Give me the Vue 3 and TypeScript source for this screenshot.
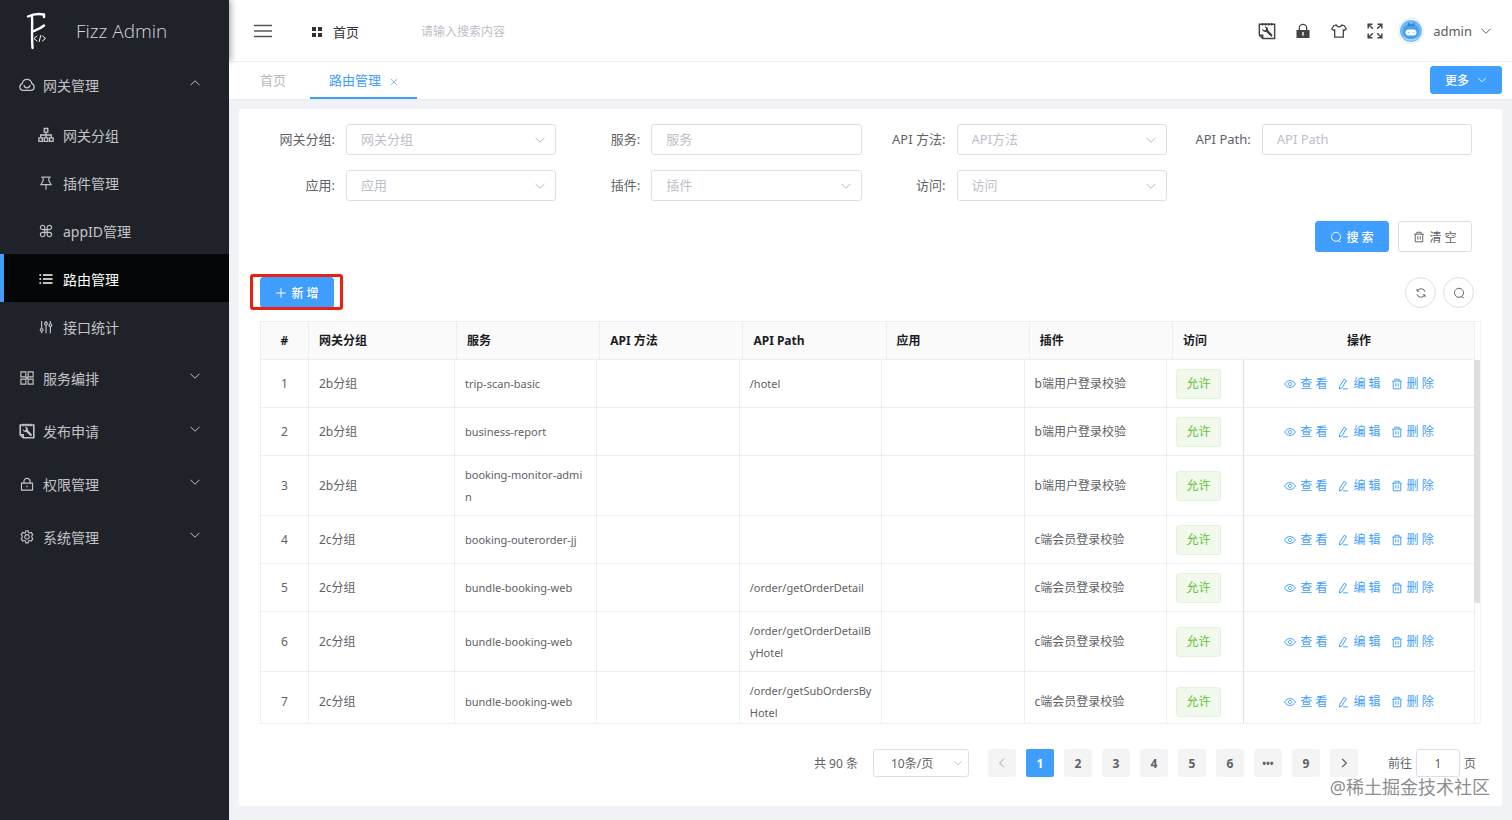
<script setup lang="ts">
import { ref } from 'vue'

interface Icon { paths: string[]; solid?: string[] }

const icons: Record<string, Icon> = {
  cloud: { paths: ['M4.3 13.4C2 13.2.9 11.600.9 9.900c0-1.700 1.100-2.900 2.300-3.300C3.700 4 5.600 2.300 8 2.300s4.300 1.700 4.800 4.300c1.200.4 2.300 1.600 2.300 3.300 0 1.700-1.100 3.300-3.400 3.500z', 'M5 8.200c.3 1.700 1.500 2.700 3 2.700s2.700-1 3-2.700'] },
  tree: { paths: ['M6.200 1.500h3.600v3.700H6.200z', 'M.9 10.800h3.500v3.500H.9z', 'M6.200 10.800h3.600v3.500H6.200z', 'M11.600 10.800h3.500v3.500h-3.500z', 'M8 5.200v5.600M2.700 10.800V8h10.600v2.800'] },
  pin: { paths: ['M2.500 1.300h11', 'M4.700 1.500v4L2.200 9.800h11.600l-2.500-4.300v-4', 'M8 9.800v6'] },
  clover: { paths: ['M6.400 6.400H4.100a2.500 2.500 0 1 1 2.500-2.500v8.200a2.500 2.500 0 1 1-2.500-2.500h7.800a2.500 2.500 0 1 1-2.500 2.500V3.900a2.500 2.500 0 1 1 2.500 2.500z'] },
  list: { paths: ['M4.500 3.500h11M4.500 8h11M4.500 12.500h11', 'M.5 3.500h2M.5 8h2M.5 12.500h2'] },
  sliders: { paths: ['M3 1v9M8 6v9M13 1v3M13 8v7M3 13v2M8 1v2', 'M3 9.700a1.600 1.600 0 1 0 .01 0z', 'M8 2.700a1.600 1.600 0 1 0 .01 0z', 'M13 4.300a1.600 1.600 0 1 0 .01 0z'] },
  blocks: { paths: ['M1 1h5.700v5.700H1zM9.300 1H15v5.700H9.300zM1 9.300h5.700V15H1zM9.300 9.300H15V15H9.300z', 'M6.700 6.700l2.600 2.600M9.300 6.700L6.700 9.300'] },
  wrench: { paths: ['M1.200 2h13.600v12.700H4.200l-3-3z', 'M1.400 11.700h2.800v2.800', 'M4 .8v2.400M6.700.8v2.400M9.300.8v2.400M12 .8v2.400', 'M7.500 8l4.800 4.700'], solid: ['M3.800 6l1.500 1.400 1.500-.4.3-1.500-1.400-1.400c1.500-.5 3.200.4 3.300 2.200l-.1.900 4.100 4.300-1.300 1.300-4.300-4.100c-1.900.7-4-.7-3.600-2.700z'] },
  lock: { paths: ['M1.700 7h12.600v8H1.700z', 'M4.500 7V5a3.500 3.500 0 0 1 7 0v2', 'M8 9.700v2'] },
  lockSolid: { paths: ['M4.300 7V5a3.700 3.700 0 0 1 7.400 0v2'], solid: ['M1.500 7h13v8h-13zM7.300 9v3.700h1.400V9z'] },
  gear: { paths: ['M6.700.9h2.600l.4 2 1.300.7 1.900-.7 1.700 2.300-1.100 1.600v1.700l1.100 1.700-1.700 2.400-1.900-.6-1.300.7-.4 2H6.700l-.4-2-1.300-.7-1.900.6-1.700-2.400 1.100-1.700V6.800L1.400 5.200 3.100 2.900l1.900.7 1.300-.7z', 'M8 5.300a2.600 2.600 0 1 0 .01 0z'] },
  shirt: { paths: ['M5.200 2c.5 1.200 1.600 1.800 2.800 1.800S10.300 3.200 10.800 2L13.300 2.700 15.300 6l-2.500 1.600-.5-.4V14.200H3.700V7.200l-.5.4L.7 6l2-3.300z'] },
  full: { paths: ['M1.200 5.500V1.200h4.300M1.500 1.500l4.300 4.300', 'M10.500 1.200h4.300v4.300M14.500 1.500l-4.300 4.300', 'M1.200 10.500v4.300h4.300M1.500 14.500l4.300-4.300', 'M10.500 14.800h4.300v-4.300M14.500 14.500l-4.300-4.300'] },
  search: { paths: ['M8 1.700a6 6 0 1 0 .01 0z', 'M11 13l3.200 1.500'] },
  refresh: { paths: ['M13.500 6.500A5.700 5.700 0 0 0 3 5.300M2.700 2.500v3h3', 'M2.500 9.500A5.700 5.700 0 0 0 13 10.700M13.300 13.500v-3h-3'] },
  trash: { paths: ['M1.500 4.200h13', 'M5.200 4V1.700h5.600V4', 'M3 4.200v10.200h10V4.200', 'M6.400 7v4.500M9.600 7v4.500'] },
  plus: { paths: ['M8 1.500v13M1.500 8h13'] },
  eye: { paths: ['M.8 8C2.500 5 5 3.400 8 3.400S13.500 5 15.200 8c-1.700 3-4.200 4.600-7.200 4.600S2.500 11 .8 8z', 'M8 5.800a2.200 2.200 0 1 0 .01 0z'] },
  edit: { paths: ['M9.500 1.700l3 1.800-6 9.700-3.200 1.500.2-3.400z', 'M8 14.500h6.500'] },
  down: { paths: ['M2 5l6 6 6-6'] },
  up: { paths: ['M2 11l6-6 6 6'] },
  left: { paths: ['M10.500 2.500L5 8l5.500 5.500'] },
  right: { paths: ['M5.500 2.500L11 8l-5.500 5.500'] },
  close: { paths: ['M2 2l12 12M14 2L2 14'] },
  menu: { paths: ['M0 2.500h16M0 8h16M0 13.500h16'] },
}

const subMenu = [
  { icon: 'tree', label: '网关分组' },
  { icon: 'pin', label: '插件管理' },
  { icon: 'clover', label: 'appID管理' },
  { icon: 'list', label: '路由管理' },
  { icon: 'sliders', label: '接口统计' },
]
const activeItem = ref('路由管理')

const groups = [
  { icon: 'blocks', label: '服务编排' },
  { icon: 'wrench', label: '发布申请' },
  { icon: 'lock', label: '权限管理' },
  { icon: 'gear', label: '系统管理' },
]

const tools = [
  { icon: 'wrench', label: '调试' },
  { icon: 'lockSolid', label: '锁屏' },
  { icon: 'shirt', label: '主题' },
  { icon: 'full', label: '全屏' },
]

const fields = [
  { id: 'group', label: '网关分组', hint: '网关分组', select: true },
  { id: 'service', label: '服务', hint: '服务', select: false },
  { id: 'method', label: 'API 方法', hint: 'API方法', select: true },
  { id: 'path', label: 'API Path', hint: 'API Path', select: false },
  { id: 'app', label: '应用', hint: '应用', select: true },
  { id: 'plugin', label: '插件', hint: '插件', select: true },
  { id: 'access', label: '访问', hint: '访问', select: true },
]

const headers = ['#', '网关分组', '服务', 'API 方法', 'API Path', '应用', '插件', '访问', '操作']

const rows = [
  { group: '2b分组', service: 'trip-scan-basic', path: '/hotel', plugin: 'b端用户登录校验' },
  { group: '2b分组', service: 'business-report', path: '', plugin: 'b端用户登录校验' },
  { group: '2b分组', service: 'booking-monitor-admin', path: '', plugin: 'b端用户登录校验' },
  { group: '2c分组', service: 'booking-outerorder-jj', path: '', plugin: 'c端会员登录校验' },
  { group: '2c分组', service: 'bundle-booking-web', path: '/order/getOrderDetail', plugin: 'c端会员登录校验' },
  { group: '2c分组', service: 'bundle-booking-web', path: '/order/getOrderDetailByHotel', plugin: 'c端会员登录校验' },
  { group: '2c分组', service: 'bundle-booking-web', path: '/order/getSubOrdersByHotel', plugin: 'c端会员登录校验' },
]

const actions = [
  { icon: 'eye', label: '查 看' },
  { icon: 'edit', label: '编 辑' },
  { icon: 'trash', label: '删 除' },
]

const pages = ['1', '2', '3', '4', '5', '6', '•••', '9']
const page = ref('1')
const jump = ref('1')
</script>

<template>
  <div class="layout">
    <aside class="side">
      <div class="brand">
        <svg class="logo" viewBox="0 0 22 38" aria-hidden="true">
          <path d="M2 4.500C7 2 13 1.500 18 2.500M18 2.500V5M6 5C6.500 15 5.500 25 6.500 36M6.500 19.500C10 18 14 17 18 13.500" />
          <path class="thin" d="M11 24l-3 2.500 3 2.500M16.500 24l3 2.500-3 2.500M14.700 23.500l-1.500 6" />
        </svg>
        <span>Fizz Admin</span>
      </div>
      <nav>
        <button class="group" type="button">
          <svg class="ico" viewBox="0 0 16 16"><path v-for="d in icons.cloud.paths" :key="d" :d="d" /></svg>
          <span>网关管理</span>
          <svg class="arrow" viewBox="0 0 16 16"><path v-for="d in icons.up.paths" :key="d" :d="d" /></svg>
        </button>
        <a v-for="m in subMenu" :key="m.label" href="#" class="sub" :class="{ on: m.label === activeItem }" @click.prevent="activeItem = m.label">
          <svg class="ico" :class="m.icon" viewBox="0 0 16 16">
            <path v-for="d in icons[m.icon].paths" :key="d" :d="d" />
            <path v-for="d in icons[m.icon].solid" :key="d" :d="d" class="solid" />
          </svg>
          <span>{{ m.label }}</span>
        </a>
        <button v-for="g in groups" :key="g.label" class="group" type="button">
          <svg class="ico" :class="g.icon" viewBox="0 0 16 16">
            <path v-for="d in icons[g.icon].paths" :key="d" :d="d" />
            <path v-for="d in icons[g.icon].solid" :key="d" :d="d" class="solid" />
          </svg>
          <span>{{ g.label }}</span>
          <svg class="arrow" viewBox="0 0 16 16"><path v-for="d in icons.down.paths" :key="d" :d="d" /></svg>
        </button>
      </nav>
    </aside>

    <div class="main">
      <header class="top">
        <button class="plain burger" type="button" aria-label="菜单">
          <svg viewBox="0 0 16 16" preserveAspectRatio="none"><path v-for="d in icons.menu.paths" :key="d" :d="d" /></svg>
        </button>
        <a class="home" href="#">
          <svg viewBox="0 0 10 10"><path class="solid" d="M0 0h4v4H0zM6 0h4v4H6zM0 6h4v4H0zM6 6h4v4H6z" /></svg>
          <span>首页</span>
        </a>
        <input class="seek" type="text" aria-label="搜索" placeholder="请输入搜索内容" />
        <div class="tools">
          <button v-for="t in tools" :key="t.icon" class="plain tool" type="button" :aria-label="t.label">
            <svg viewBox="0 0 16 16" :class="t.icon">
              <path v-for="d in icons[t.icon].paths" :key="d" :d="d" />
              <path v-for="d in icons[t.icon].solid" :key="d" :d="d" class="solid" />
            </svg>
          </button>
          <svg class="avatar" viewBox="0 0 26 26" aria-hidden="true">
            <circle cx="13" cy="13" r="12.500" fill="#fff" stroke="#e4eefa" />
            <circle cx="13" cy="13" r="11" fill="#74b8f2" />
            <path d="M4 18a11 11 0 0 0 18 0l-3 1H7z" fill="#a9d5fa" />
            <path d="M5 14c0-5 3-8 8-8s8 3 8 8-3 7-8 7-8-2-8-7z" fill="#4a9fec" />
            <path d="M10 4l3 3 4-3-1 4h-6z" fill="#2f84d8" />
            <rect x="7.500" y="11.500" width="11" height="6" rx="3" fill="#fff" />
            <path d="M10 14.500h1.500M14.500 14.500H16" stroke="#8cc4f4" stroke-width="1" />
          </svg>
          <button class="plain user" type="button">
            <span>admin</span>
            <svg viewBox="0 0 16 16"><path v-for="d in icons.down.paths" :key="d" :d="d" /></svg>
          </button>
        </div>
      </header>

      <div class="tabs">
        <a class="tab" href="#">首页</a>
        <a class="tab on" href="#">
          <span>路由管理</span>
          <svg viewBox="0 0 16 16"><path v-for="d in icons.close.paths" :key="d" :d="d" /></svg>
        </a>
        <button class="btn primary more" type="button">
          <span>更多</span>
          <svg viewBox="0 0 16 16"><path v-for="d in icons.down.paths" :key="d" :d="d" /></svg>
        </button>
      </div>

      <main class="card">
        <form class="filters" @submit.prevent>
          <div v-for="f in fields" :key="f.id" class="field">
            <label :for="f.id">{{ f.label }}:</label>
            <div class="control">
              <select v-if="f.select" :id="f.id"><option>{{ f.hint }}</option></select>
              <input v-else :id="f.id" type="text" :placeholder="f.hint" />
              <svg v-if="f.select" class="caret" viewBox="0 0 16 16"><path v-for="d in icons.down.paths" :key="d" :d="d" /></svg>
            </div>
          </div>
          <div class="buttons">
            <button class="btn primary" type="submit">
              <svg viewBox="0 0 16 16"><path v-for="d in icons.search.paths" :key="d" :d="d" /></svg>
              <span>搜 索</span>
            </button>
            <button class="btn" type="reset">
              <svg viewBox="0 0 16 16"><path v-for="d in icons.trash.paths" :key="d" :d="d" /></svg>
              <span>清 空</span>
            </button>
          </div>
        </form>

        <div class="bar">
          <div class="add">
            <button class="btn primary" type="button">
              <svg viewBox="0 0 16 16"><path v-for="d in icons.plus.paths" :key="d" :d="d" /></svg>
              <span>新 增</span>
            </button>
            <div class="frame"></div>
          </div>
          <div class="rounds">
            <button class="round" type="button" aria-label="刷新">
              <svg viewBox="0 0 16 16"><path v-for="d in icons.refresh.paths" :key="d" :d="d" /></svg>
            </button>
            <button class="round" type="button" aria-label="搜索">
              <svg viewBox="0 0 16 16"><path v-for="d in icons.search.paths" :key="d" :d="d" /></svg>
            </button>
          </div>
        </div>

        <div class="grid">
          <table class="head">
            <colgroup>
              <col class="c-no" /><col class="c-group" /><col /><col /><col /><col /><col /><col class="c-access" /><col class="c-act" />
            </colgroup>
            <thead>
              <tr><th v-for="h in headers" :key="h" scope="col">{{ h }}</th></tr>
            </thead>
          </table>
          <div class="scroll">
            <table class="body">
              <colgroup>
                <col class="c-no" /><col class="c-group" /><col /><col /><col /><col /><col /><col class="c-access" /><col class="c-act" />
              </colgroup>
              <tbody>
                <tr v-for="(r, i) in rows" :key="i">
                  <td>{{ i + 1 }}</td>
                  <td>{{ r.group }}</td>
                  <td class="latin">{{ r.service }}</td>
                  <td></td>
                  <td class="latin">{{ r.path }}</td>
                  <td></td>
                  <td>{{ r.plugin }}</td>
                  <td class="access"><span class="tag">允许</span></td>
                  <td>
                    <div class="acts">
                      <button v-for="a in actions" :key="a.icon" class="plain act" type="button">
                        <svg viewBox="0 0 16 16"><path v-for="d in icons[a.icon].paths" :key="d" :d="d" /></svg>
                        <span>{{ a.label }}</span>
                      </button>
                    </div>
                  </td>
                </tr>
              </tbody>
            </table>
            <div class="thumb"></div>
          </div>
        </div>

        <div class="pager">
          <span class="total">共 90 条</span>
          <div class="size">
            <select aria-label="每页条数"><option>10条/页</option></select>
            <svg class="caret" viewBox="0 0 16 16"><path v-for="d in icons.down.paths" :key="d" :d="d" /></svg>
          </div>
          <div class="pages">
            <button class="pg off" type="button" aria-label="上一页" disabled>
              <svg viewBox="0 0 16 16"><path v-for="d in icons.left.paths" :key="d" :d="d" /></svg>
            </button>
            <button v-for="p in pages" :key="p" class="pg" :class="{ on: p === page, dots: p === '•••' }" type="button" @click="page = p">{{ p }}</button>
            <button class="pg" type="button" aria-label="下一页">
              <svg viewBox="0 0 16 16"><path v-for="d in icons.right.paths" :key="d" :d="d" /></svg>
            </button>
          </div>
          <label class="jump"><span>前往</span><input v-model="jump" type="text" /><span>页</span></label>
        </div>
      </main>
    </div>
    <div class="mark">@稀土掘金技术社区</div>
  </div>
</template>

<style>
body {
  margin: 0;
  overflow: hidden;
}
</style>

<style scoped>
.layout {
  display: flex;
  position: relative;
  min-height: 100vh;
  background: #f0f2f5;
  font-family: "Noto Sans", "Noto Sans CJK SC", sans-serif;
  font-size: 12px;
  color: #606266;
}
* {
  box-sizing: border-box;
}
a {
  color: inherit;
  text-decoration: none;
}
button,
input,
select {
  font: inherit;
  color: inherit;
  margin: 0;
}
button {
  cursor: pointer;
}
svg {
  display: block;
  flex: none;
  fill: none;
  stroke: currentColor;
  stroke-width: 1.3;
}
svg .solid {
  fill: currentColor;
  fill-rule: evenodd;
  stroke: none;
}
.plain {
  display: flex;
  align-items: center;
  padding: 0;
  border: 0;
  background: none;
}

/* sidebar */
.side {
  flex: none;
  width: 229px;
  background: #20222a;
  color: #c3c4c7;
  font-size: 14px;
}
.brand {
  display: flex;
  position: relative;
  align-items: center;
  gap: 28px;
  height: 61px;
  padding: 0 0 0 26px;
  box-shadow: 2px 0 6px rgba(0, 21, 41, 0.35);
  background: #20222a;
  font-family: "Open Sans", "Noto Sans", sans-serif;
  font-size: 19px;
  font-weight: 300;
  color: #d6d7da;
}
nav {
  position: relative;
  margin-top: -4px;
  background: #20222a;
}
.logo {
  width: 22px;
  height: 38px;
  stroke: #fff;
  stroke-width: 2.4;
  stroke-linecap: round;
}
.logo .thin {
  stroke-width: 1;
}
.group {
  display: flex;
  align-items: center;
  width: 100%;
  height: 53px;
  padding: 3px 28px 0 19px;
  border: 0;
  background: none;
}
.side .ico {
  width: 16px;
  height: 16px;
  margin-right: 8px;
}
.side .list,
.side .blocks,
.side .gear,
.side .lock,
.side .pin,
.side .clover,
.side .sliders {
  padding: 1px;
}
.side .list,
.side .wrench {
  stroke-width: 1.6;
}
.group .arrow {
  width: 12px;
  height: 12px;
  margin: 0 0 5px auto;
}
.sub {
  display: flex;
  align-items: center;
  height: 48px;
  padding: 2px 0 0 34px;
  border-left: 4px solid transparent;
}
.sub .ico {
  margin-right: 9px;
}
.sub.on {
  border-left-color: #409eff;
  background: #050608;
  color: #fff;
}

/* top bar */
.main {
  display: flex;
  flex: 1;
  flex-direction: column;
  min-width: 0;
}
.top {
  display: flex;
  align-items: center;
  height: 62px;
  padding: 0 20px 0 25px;
  border-bottom: 1px solid #f0f1f3;
  background: #fff;
  color: #303133;
  font-size: 13px;
}
.burger svg {
  width: 18px;
  height: 16px;
  color: #555;
}
.home {
  display: flex;
  align-items: center;
  gap: 11px;
  margin: 2px 62px 0 40px;
}
.home svg {
  width: 10px;
  height: 10px;
}
.seek {
  width: 200px;
  padding: 2px 0 0;
  border: 0;
  outline: 0;
  background: none;
  font-size: 12px;
}
input::placeholder {
  color: #bcc0c8;
  opacity: 1;
}
.tools {
  display: flex;
  align-items: center;
  margin-left: auto;
}
.tool {
  justify-content: center;
  width: 18px;
  margin-right: 18px;
  color: #444;
}
.tool svg {
  width: 16px;
  height: 16px;
}
.tool .wrench {
  width: 18px;
  height: 18px;
}
.tool .full {
  stroke-width: 1.5;
}
.avatar {
  width: 26px;
  height: 26px;
  margin: 0 9px 0 -4px;
  stroke: none;
}
.user {
  gap: 8px;
  color: #5a5c60;
  font-size: 13px;
}
.user svg {
  width: 12px;
  height: 12px;
}

/* tabs */
.tabs {
  display: flex;
  align-items: center;
  height: 37px;
  padding: 0 10px 0 7px;
  background: #fff;
  box-shadow: 0 1px 2px rgba(0, 0, 0, 0.04);
  font-size: 13px;
}
.tab {
  display: flex;
  align-items: center;
  gap: 9px;
  height: 37px;
  padding: 0 24px;
  border-bottom: 2px solid transparent;
  color: #b8babd;
}
.tab.on {
  padding: 0 19px;
  border-bottom-color: #409eff;
  color: #409eff;
}
.tab svg {
  width: 8px;
  height: 8px;
  margin-top: 4px;
}
.btn {
  display: flex;
  align-items: center;
  justify-content: center;
  gap: 4px;
  min-width: 74px;
  height: 31px;
  padding: 0 12px;
  border: 1px solid #dcdfe6;
  border-radius: 3px;
  background: #fff;
  font-size: 12px;
}
.btn svg {
  width: 12px;
  height: 12px;
}
.btn.primary {
  border-color: #409eff;
  background: #409eff;
  color: #fff;
  font-weight: 500;
}
.more {
  gap: 8px;
  min-width: 72px;
  height: 28px;
  margin: 0 0 2px auto;
}
.more svg {
  width: 10px;
  height: 10px;
}

/* filters */
.card {
  flex: 1;
  margin: 10px 10px 14px;
  padding: 15px 21px 0;
  border-radius: 3px;
  background: #fff;
}
.filters {
  display: grid;
  grid-template-columns: repeat(4, 1fr);
  row-gap: 15px;
  margin: 0 9px 0 -9px;
}
.field {
  display: flex;
  align-items: center;
  font-size: 13px;
}
.field label {
  flex: none;
  width: 95px;
  padding: 0 11px 2px 0;
  text-align: right;
}
.control {
  flex: 1;
  position: relative;
  min-width: 0;
}
.control input,
.control select {
  display: block;
  width: 100%;
  height: 31px;
  padding: 0 14px 2px;
  border: 1px solid #dcdfe6;
  border-radius: 3px;
  outline: 0;
  appearance: none;
  background: #fff;
}
.control select {
  color: #bcc0c8;
}
.caret {
  position: absolute;
  top: 50%;
  right: 10px;
  width: 12px;
  height: 12px;
  margin-top: -6px;
  color: #b4b8c0;
  pointer-events: none;
}
.buttons {
  display: flex;
  grid-column: 1 / -1;
  justify-content: flex-end;
  gap: 9px;
  margin-top: 5px;
}

/* toolbar */
.bar {
  display: flex;
  align-items: center;
  justify-content: space-between;
  margin: 25px 7px 13px 0;
}
.add {
  position: relative;
}
.frame {
  position: absolute;
  inset: -3px -9px -2px -10px;
  border: 3px solid #e8220f;
  border-radius: 3px;
  pointer-events: none;
}
.rounds {
  display: flex;
  gap: 7px;
}
.round {
  display: flex;
  align-items: center;
  justify-content: center;
  width: 31px;
  height: 31px;
  padding: 0;
  border: 1px solid #dcdfe6;
  border-radius: 50%;
  background: #fff;
}
.round svg {
  width: 12px;
  height: 12px;
}

/* table */
.grid {
  overflow: hidden;
  border: 1px solid #ebeef5;
  border-right-color: #f3f4f6;
}
table {
  width: calc(100% - 5px);
  border-spacing: 0;
  table-layout: fixed;
}
th,
td {
  padding: 0 10px;
  border-right: 1px solid #ebeef5;
  border-bottom: 1px solid #ebeef5;
  line-height: 22px;
  text-align: left;
  word-break: break-all;
}
th {
  height: 38px;
  background: #fafafa;
  color: #1c1d1f;
  font-weight: 700;
}
td {
  height: 48px;
  padding: 8px 10px 7px;
}
td.latin {
  padding-right: 9px;
  font-size: 11px;
}
th:nth-child(8) {
  border-right-color: #fafafa;
}
th:first-child,
td:first-child,
th:last-child {
  text-align: center;
}
.c-no {
  width: 48px;
}
.head .c-group {
  width: 148px;
}
.body .c-group {
  width: 146px;
}
.head .c-access {
  width: 71px;
}
.body .c-access {
  width: 77px;
}
.c-act {
  width: 231px;
}
.scroll {
  position: relative;
  height: 363px;
  overflow: hidden;
}
.thumb {
  position: absolute;
  top: 0;
  right: 0;
  width: 6px;
  height: 67%;
  background: #dddee0;
}
.access {
  border-right: 1px solid #dcdfe6;
}
.tag {
  display: flex;
  align-items: center;
  justify-content: center;
  width: 45px;
  height: 30px;
  border: 1px solid #e1f3d8;
  border-radius: 3px;
  background: #f0f9eb;
  color: #67c23a;
}
td.access {
  padding: 8px 9px;
}
.acts {
  display: flex;
  justify-content: center;
  gap: 10px;
}
.act {
  gap: 4px;
  color: #409eff;
}
.act svg {
  width: 12px;
  height: 12px;
}

/* pager */
.pager {
  display: flex;
  align-items: center;
  justify-content: flex-end;
  margin: 25px 5px 0 0;
}
.size {
  position: relative;
  width: 96px;
  margin: 0 19px 0 15px;
}
.size select {
  display: block;
  width: 100%;
  height: 28px;
  padding: 0 17px;
  border: 1px solid #dcdfe6;
  border-radius: 3px;
  appearance: none;
  background: #fff;
}
.size .caret {
  right: 6px;
  width: 10px;
}
.pages {
  display: flex;
  gap: 10px;
}
.pg {
  display: flex;
  align-items: center;
  justify-content: center;
  width: 28px;
  height: 28px;
  padding: 0;
  border: 0;
  border-radius: 2px;
  background: #f4f4f5;
  font-weight: 700;
}
.pg svg {
  width: 12px;
  height: 12px;
  stroke-width: 1.8;
}
.pg.dots {
  font-size: 10px;
}
.pg.off {
  color: #c0c4cc;
}
.pg.on {
  background: #409eff;
  color: #fff;
}
.jump {
  display: flex;
  align-items: center;
  gap: 4px;
  margin-left: 30px;
}
.jump input {
  width: 44px;
  height: 28px;
  padding: 0;
  border: 1px solid #dcdfe6;
  border-radius: 3px;
  text-align: center;
}
.mark {
  position: absolute;
  right: 22px;
  bottom: 20px;
  color: #8c8e91;
  font-size: 18px;
  line-height: 26px;
  text-shadow: 0 0 2px #fff;
  pointer-events: none;
}
</style>
